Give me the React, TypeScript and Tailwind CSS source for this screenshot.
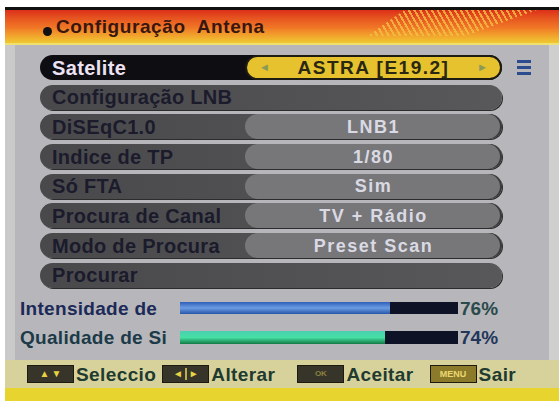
import React from 'react'

const rows = [
  { label: 'Configuração LNB', value: '' },
  { label: 'DiSEqC1.0', value: 'LNB1' },
  { label: 'Indice de TP', value: '1/80' },
  { label: 'Só FTA', value: 'Sim' },
  { label: 'Procura de Canal', value: 'TV + Rádio' },
  { label: 'Modo de Procura', value: 'Preset Scan' },
  { label: 'Procurar', value: '' },
]

function FooterKey({ children, label, light }: { children: React.ReactNode; label: string; light?: boolean }) {
  return (
    <div className="flex items-center">
      <div
        className={
          'flex h-[18px] w-[47px] items-center justify-center gap-[2px] border border-[#1d1b10] ' +
          (light ? 'bg-[#8a7a2a]' : 'bg-[#37352a]')
        }
      >
        {children}
      </div>
      <span className="ml-[2px] text-[19px] font-bold leading-none tracking-[0.4px] text-[#213a30]">{label}</span>
    </div>
  )
}

export default function App() {
  return (
    <div className="flex h-[401px] w-[559px] flex-col overflow-hidden bg-white pl-[5px] pt-[7px] font-['Liberation_Sans',Arial,sans-serif]">
      {/* title bar */}
      <div className="relative flex h-[38px] shrink-0 items-center border-t-[3px] border-[#111] bg-gradient-to-b from-[#dc2e1a] via-[#f07626] to-[#ecd334] pl-[38px]">
        <div
          className="absolute left-[362px] top-0 h-[26px] w-[170px] bg-[repeating-linear-gradient(60deg,transparent_0px,transparent_3px,#f3c044_3px,#f3c044_5px)] opacity-80"
          style={{ clipPath: 'polygon(22% 0, 100% 0, 58% 100%, 0 100%)' }}
        />
        <span className="mr-[4px] mt-[7px] h-[9px] w-[9px] rounded-full bg-[#111]" />
        <span className="relative text-[19px] font-bold tracking-[0.6px] text-[#3a1610]">Configuração&nbsp; Antena</span>
        <div className="absolute bottom-0 left-0 right-0 h-[2px] bg-[#f0e070]" />
      </div>

      {/* body */}
      <div className="flex h-[315px] shrink-0 bg-[#b7b7bb]">
        <div className="w-[10px] bg-[#cacacb]" />
        <div className="flex flex-1 flex-col">
          <div className="ml-[25px] mt-[10px] flex flex-col gap-[4.7px]">
            {/* satellite row */}
            <div className="relative flex h-[25px] items-center">
              <div className="flex h-[25px] w-[462px] items-center rounded-full bg-[#0d0d12] pl-[12px]">
                <span className="text-[20px] font-bold leading-none tracking-[0.4px] text-[#ece2f2]">Satelite</span>
              </div>
              <div className="absolute left-[205px] flex h-[25px] w-[257px] items-center justify-between rounded-full border-2 border-[#1e1c12] bg-[#e5c22e] px-[12px]">
                <span className="text-[11px] text-[#8a9a58]">◄</span>
                <span className="text-[19px] font-bold leading-none tracking-[1.5px] text-[#2a2812]">ASTRA [E19.2]</span>
                <span className="text-[11px] text-[#8a9a58]">►</span>
              </div>
              <div className="ml-[15px] flex flex-col gap-[3px]">
                <span className="h-[3px] w-[14px] bg-[#2b4c8e]" />
                <span className="h-[3px] w-[14px] bg-[#2b4c8e]" />
                <span className="h-[3px] w-[14px] bg-[#2b4c8e]" />
              </div>
            </div>

            {rows.map((row) => (
              <div
                key={row.label}
                className="relative flex h-[25px] w-[462px] items-center rounded-full bg-gradient-to-r from-[#49494c] to-[#58585a] pl-[12px] shadow-[1px_1px_0_#2c2c2c]"
              >
                <span className="text-[20px] font-bold leading-none tracking-[0.3px] text-[#1b1b2c]">{row.label}</span>
                {row.value && (
                  <div className="absolute right-0 top-0 flex h-[25px] w-[257px] items-center justify-center rounded-full bg-[#777779] shadow-[inset_-2px_0_0_#3a3a3a]">
                    <span className="text-[18px] font-bold leading-none tracking-[1.5px] text-[#dadae4]">{row.value}</span>
                  </div>
                )}
              </div>
            ))}
          </div>

          {/* signal */}
          <div className="ml-[5px] mt-[11px] flex flex-col gap-[10px]">
            <div className="flex items-center">
              <span className="w-[160px] text-[19px] font-bold leading-none tracking-[0.3px] text-[#1c2a58]">Intensidade de</span>
              <div className="flex h-[12px] w-[278px]">
                <div className="h-full w-[210px] bg-gradient-to-b from-[#2f5fba] via-[#6c9ce2] to-[#2656a8]" />
                <div className="h-full flex-1 bg-[#0e1226]" />
              </div>
              <span className="ml-[2px] text-[19px] font-bold leading-none text-[#2a4a4c]">76%</span>
            </div>
            <div className="flex items-center">
              <span className="w-[160px] text-[19px] font-bold leading-none tracking-[0.3px] text-[#1c3a48]">Qualidade de Si</span>
              <div className="flex h-[13px] w-[278px]">
                <div className="h-full w-[205px] bg-gradient-to-b from-[#4ad0b0] via-[#46e0a4] to-[#127a44]" />
                <div className="h-full flex-1 bg-[#0e1226]" />
              </div>
              <span className="ml-[2px] text-[19px] font-bold leading-none text-[#24365a]">74%</span>
            </div>
          </div>
        </div>
        <div className="w-[10px] bg-[#cfcfd0]" />
      </div>

      {/* footer */}
      <div className="flex flex-1 flex-col bg-[#d7d29c]">
        <div className="flex h-[28px] items-center gap-[6px] pl-[22px]">
          <FooterKey label="Seleccio">
            <span className="text-[10px] leading-none text-[#e6d444]">▲</span>
            <span className="text-[10px] leading-none text-[#e6d444]">▼</span>
          </FooterKey>
          <FooterKey label="Alterar">
            <span className="text-[10px] leading-none text-[#e6d444]">◄</span>
            <span className="h-[12px] w-[2px] bg-[#b8b050]" />
            <span className="text-[10px] leading-none text-[#e6d444]">►</span>
          </FooterKey>
          <div className="w-[10px]" />
          <FooterKey label="Aceitar">
            <span className="text-[8px] font-bold leading-none text-[#8a8040]">OK</span>
          </FooterKey>
          <div className="w-[4px]" />
          <FooterKey label="Sair" light>
            <span className="text-[9px] font-bold leading-none text-[#ecd870]">MENU</span>
          </FooterKey>
        </div>
        <div className="flex-1 bg-[#e7d42e]" />
      </div>
    </div>
  )
}
